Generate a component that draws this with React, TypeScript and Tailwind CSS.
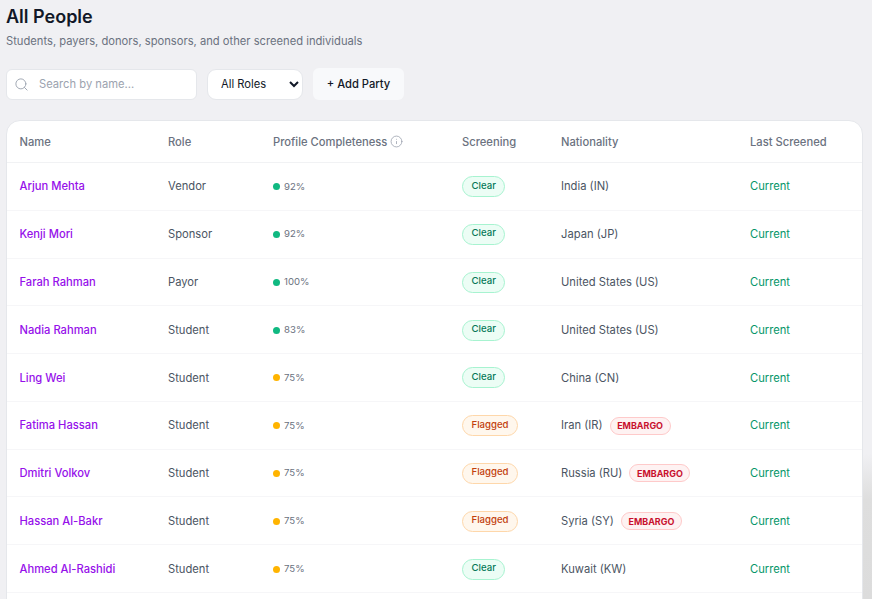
import { Info, Search } from "lucide-react";

const people = [
  { name: "Arjun Mehta", role: "Vendor", pct: 92, screening: "Clear", nat: "India (IN)" },
  { name: "Kenji Mori", role: "Sponsor", pct: 92, screening: "Clear", nat: "Japan (JP)" },
  { name: "Farah Rahman", role: "Payor", pct: 100, screening: "Clear", nat: "United States (US)" },
  { name: "Nadia Rahman", role: "Student", pct: 83, screening: "Clear", nat: "United States (US)" },
  { name: "Ling Wei", role: "Student", pct: 75, screening: "Clear", nat: "China (CN)" },
  { name: "Fatima Hassan", role: "Student", pct: 75, screening: "Flagged", nat: "Iran (IR)", embargo: true },
  { name: "Dmitri Volkov", role: "Student", pct: 75, screening: "Flagged", nat: "Russia (RU)", embargo: true },
  { name: "Hassan Al-Bakr", role: "Student", pct: 75, screening: "Flagged", nat: "Syria (SY)", embargo: true },
  { name: "Ahmed Al-Rashidi", role: "Student", pct: 75, screening: "Clear", nat: "Kuwait (KW)" },
];

function ScreeningBadge({ value }: { value: string }) {
  if (value === "Flagged") {
    return (
      <span className="inline-flex h-[21px] items-center rounded-full border border-[#fed7aa] bg-[#fff7ed] px-[8.5px] pb-[2px] text-[9.6px] font-medium text-[#c2410c]">
        Flagged
      </span>
    );
  }
  return (
    <span className="inline-flex h-[21px] items-center rounded-full border border-[#a7f3d0] bg-[#ecfdf5] px-[8.5px] pb-[2px] text-[9.6px] font-medium text-[#047857]">
      Clear
    </span>
  );
}

export default function App() {
  return (
    <div className="h-[599px] overflow-hidden bg-[#f0f0f3] bg-[radial-gradient(circle_at_100%_100%,#dcdcdc_0,#dedede_100px,#f0f0f3_145px)] px-[6px] pt-[5px] font-['Inter',sans-serif]">
      <h1 className="text-[18px] leading-[24px] font-semibold text-[#111827]">All People</h1>
      <p className="mt-[5px] text-[11.2px] leading-[14px] text-[#6b7280]">
        Students, payers, donors, sponsors, and other screened individuals
      </p>

      {/* Toolbar */}
      <div className="mt-[20px] flex h-[32px] items-center">
        <div className="flex h-[31px] w-[191px] items-center rounded-[6px] border border-[#e5e7eb] bg-white pl-[7px]">
          <Search className="h-[15px] w-[15px] shrink-0 text-[#9ca3af]" strokeWidth={1.5} />
          <input
            placeholder="Search by name..."
            className="ml-[10px] w-full bg-transparent text-[11.2px] outline-none placeholder:text-[#9ca3af]"
          />
        </div>
        <select className="ml-[10px] h-[31px] w-[96px] rounded-[9px] border border-[#e5e7eb] bg-white pl-[9px] text-[11.2px] text-[#111827]">
          <option>All Roles</option>
        </select>
        <button className="ml-[10px] h-[32px] w-[91px] rounded-[6px] bg-[#f8f9fb] text-[11.2px] font-medium text-[#111827]">
          + Add Party
        </button>
      </div>

      {/* Table */}
      <div className="mt-[20px] h-[600px] w-[857px] overflow-hidden rounded-t-[14px] border border-[#e5e7eb] bg-white">
        <table className="w-full table-fixed border-collapse text-left">
          <colgroup>
            <col className="w-[161px]" />
            <col className="w-[105px]" />
            <col className="w-[189px]" />
            <col className="w-[99px]" />
            <col className="w-[189px]" />
            <col />
          </colgroup>
          <thead>
            <tr className="h-[41.5px] border-b border-[#f1f2f4] text-[11.2px] text-[#6b7280]">
              <th className="pl-[12.5px] pt-px font-medium">Name</th>
              <th className="pt-px font-medium">Role</th>
              <th className="pt-px font-medium">
                <span className="flex items-center gap-[3px]">
                  Profile Completeness
                  <Info className="h-[13px] w-[13px] text-[#9ca3af]" strokeWidth={1.5} />
                </span>
              </th>
              <th className="pt-px font-medium">Screening</th>
              <th className="pt-px font-medium">Nationality</th>
              <th className="pt-px font-medium">Last Screened</th>
            </tr>
          </thead>
          <tbody>
            {people.map((p) => (
              <tr key={p.name} className="h-[47.78px] border-b border-[#f6f6f8] text-[11.2px] text-[#4b5563]">
                <td className="pl-[12.5px] pt-px font-medium text-[#9610ea]">{p.name}</td>
                <td className="pt-px">{p.role}</td>
                <td className="pt-px">
                  <span className="flex items-center gap-[4px] text-[9.6px] text-[#6b7280]">
                    <span className={p.pct >= 80 ? "h-[7px] w-[7px] rounded-full bg-[#10b981]" : "h-[7px] w-[7px] rounded-full bg-[#ffb400]"} />
                    {p.pct}%
                  </span>
                </td>
                <td className="pt-px">
                  <ScreeningBadge value={p.screening} />
                </td>
                <td className="pt-px">
                  <span className="flex items-center gap-[7px]">
                    {p.nat}
                    {p.embargo && (
                      <span className="inline-flex h-[18px] items-center rounded-full border border-[#fecaca] bg-[#fef2f2] px-[6.5px] text-[8.96px] font-bold text-[#c8102e]">
                        EMBARGO
                      </span>
                    )}
                  </span>
                </td>
                <td className="pt-px text-[#059669]">Current</td>
              </tr>
            ))}
          </tbody>
        </table>
      </div>
    </div>
  );
}
